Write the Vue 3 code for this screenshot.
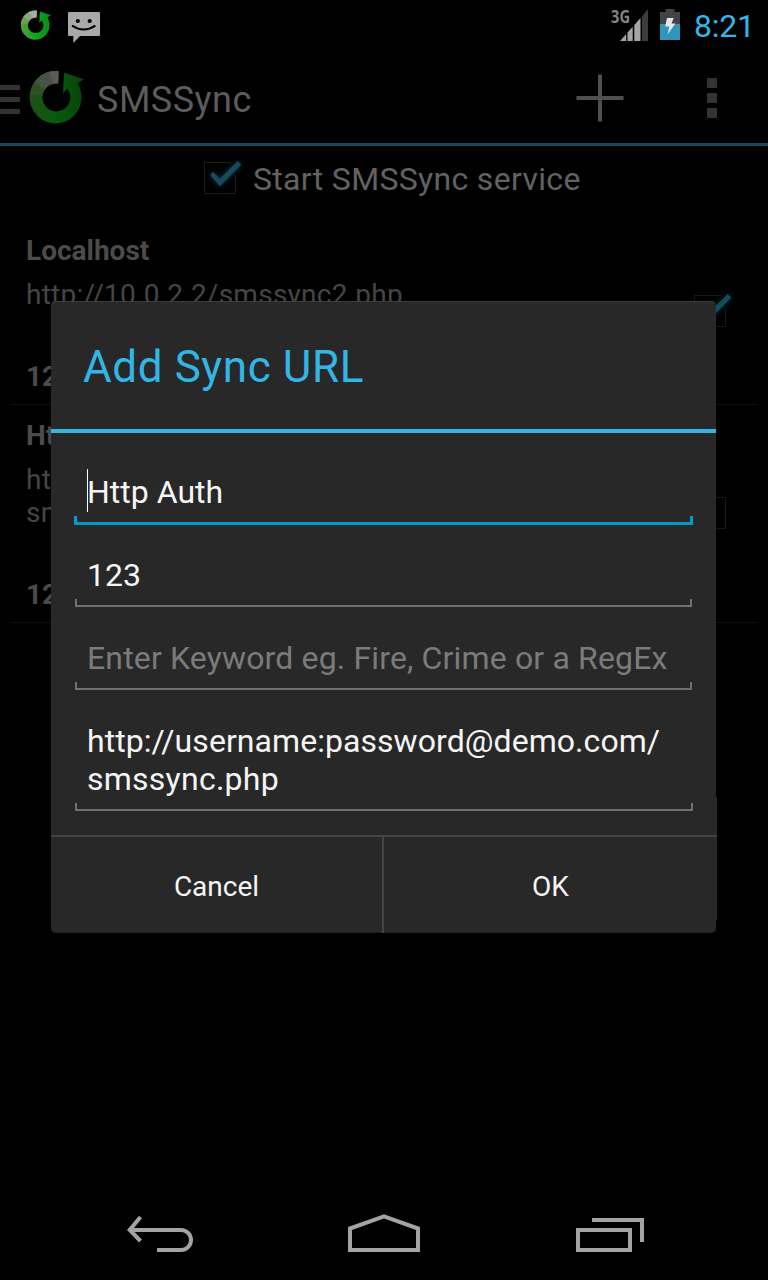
<script setup>
const items = [
  { title: 'Localhost', url: ['http://10.0.2.2/smssync2.php'], secret: '123', checked: true },
  { title: 'Http Auth', url: ['http://username:password@demo.com/', 'smssync.php'], secret: '123', checked: false },
]
const fields = [
  { lines: ['Http Auth'], focused: true },
  { lines: ['123'] },
  { lines: ['Enter Keyword eg. Fire, Crime or a RegEx'], hint: true },
  { lines: ['http://username:password@demo.com/', 'smssync.php'], url: true },
]
const ring = 'M34 2.7 L54 9.3 L47.7 13.3 A26 26.3 0 1 1 28.7 1.1 L28.3 13.6 A14 14 0 1 0 37.3 18.7 L33 23.3Z'
</script>

<template>
  <div class="screen">
    <header class="status">
      <svg class="logo-small" viewBox="0 0 54 54">
        <defs>
          <linearGradient id="ringBright" x1="0" y1="0" x2="1" y2="0">
            <stop offset="0" stop-color="#5a9c3f" /><stop offset=".45" stop-color="#10a51c" /><stop offset="1" stop-color="#078d18" />
          </linearGradient>
          <clipPath id="ringClip"><path :d="ring" /></clipPath>
        </defs>
        <path :d="ring" fill="url(#ringBright)" />
        <g clip-path="url(#ringClip)">
          <path d="M26 27 L-6 24 L-2 6 Z" fill="#6e9c58" />
          <path d="M26 27 L-2 8 L10 -6 Z" fill="#8ba37f" />
          <path d="M26 27 L9 -6 L30 -6 V27Z" fill="#a7aba5" />
        </g>
      </svg>
      <svg class="message" viewBox="0 0 32 31">
        <path d="M1 0H31Q32 0 32 1V23Q32 24 31 24H12L5.3 31V24H1Q0 24 0 23V1Q0 0 1 0Z" fill="#a9a9a9" />
        <circle cx="9.8" cy="9" r="2.1" /><circle cx="21.7" cy="9" r="2.1" />
        <path d="M4 13.7Q15.7 21.5 27.4 13.7" fill="none" stroke="#000" stroke-width="2" />
      </svg>
      <svg class="signal" viewBox="0 0 37 32">
        <path d="M9 32L15.2 25V32ZM16.5 32V23.6L21.7 17.7V32ZM23.3 32V15.9L29.5 9V32Z" fill="#a5a5a5" />
        <path d="M31 32V7.2L37 0V32Z" fill="#3c3c3c" />
        <text x="0" y="14" textLength="19" lengthAdjust="spacingAndGlyphs">3G</text>
      </svg>
      <svg class="battery" viewBox="0 0 20 31">
        <path d="M5.5 0H14.5V3H20V15H0V3H5.5Z" fill="#434343" />
        <path d="M0 15H20V31H0Z" fill="#3094bb" />
        <path d="M7 9H13.7L11.5 14.5H15.5L7.5 25.5L9.3 17.5H5.2Z" fill="#e3e7e8" />
      </svg>
      <span class="clock">8:21</span>
    </header>

    <div class="actionbar">
      <div class="drawer"><i /><i /><i /></div>
      <svg class="logo" viewBox="0 0 54 54">
        <defs>
          <linearGradient id="ringDim" x1="0" y1="0" x2="1" y2="0">
            <stop offset="0" stop-color="#244f18" /><stop offset=".45" stop-color="#075c0c" /><stop offset="1" stop-color="#064409" />
          </linearGradient>
        </defs>
        <path :d="ring" fill="url(#ringDim)" />
        <g clip-path="url(#ringClip)">
          <path d="M26 27 L-6 24 L-2 6 Z" fill="#304f28" />
          <path d="M26 27 L-2 8 L10 -6 Z" fill="#465344" />
          <path d="M26 27 L9 -6 L19 -6Z" fill="#4c504b" />
          <path d="M26 27 L18 -6 L30 -6 V27Z" fill="#5a5b59" />
        </g>
      </svg>
      <span class="app-name">SMSSync</span>
      <svg class="plus" viewBox="0 0 48 48"><path d="M.5 24H47.5M24 .5V47.5" stroke="#4d504c" stroke-width="4" /></svg>
      <div class="overflow"><i /><i /><i /></div>
    </div>

    <div class="service">
      <svg class="check" viewBox="0 0 32 32">
        <path d="M27 .5H.5V31.5H31.5V13" fill="none" stroke="#1c1c1c" />
        <path class="tick" d="M6 13L9.3 9.7L15.7 16.7L33.7 -1L37.3 2.7L16 24.3Z" />
      </svg>
      <span>Start SMSSync service</span>
    </div>

    <ul class="list">
      <li v-for="item in items" :key="item.title" class="item">
        <div>
          <div class="item-title">{{ item.title }}</div>
          <div class="item-url"><div v-for="l in item.url" :key="l">{{ l }}</div></div>
          <div class="item-secret">{{ item.secret }}</div>
        </div>
        <svg class="check" viewBox="0 0 32 32">
          <path :d="item.checked ? 'M27 .5H.5V31.5H31.5V13' : 'M.5 .5H31.5V31.5H.5Z'" fill="none" stroke="#131a13" />
          <path v-if="item.checked" class="tick" d="M6 13L9.3 9.7L15.7 16.7L33.7 -1L37.3 2.7L16 24.3Z" />
        </svg>
      </li>
    </ul>

    <nav class="nav">
      <svg class="back" viewBox="0 0 66 36"><path d="M4 14H54A10 10 0 0 1 54 34H30M13.5 1L2.7 14L13.5 25" /></svg>
      <svg class="home" viewBox="0 0 72 38"><path d="M2 36V14.5L36 2.3L70 14.5V36Z" /></svg>
      <svg class="recent" viewBox="0 0 68 34"><path d="M2 12H54V32H2ZM16 2H66V24" /></svg>
    </nav>

    <section class="dialog">
      <h1>Add Sync URL</h1>
      <div class="form">
        <div v-for="(f, i) in fields" :key="i" class="field" :class="{ focused: f.focused, hint: f.hint, url: f.url }">
          <div v-for="l in f.lines" :key="l" class="line">{{ l }}</div>
          <div class="bracket" />
        </div>
      </div>
      <footer>
        <div class="btn">Cancel</div>
        <div class="btn ok">OK</div>
      </footer>
    </section>
  </div>
</template>

<style>
html, body { background: #000; }
</style>

<style scoped>
.screen { position: relative; width: 768px; height: 1280px; background: #000; overflow: hidden; display: flex; flex-direction: column; font-family: Roboto, sans-serif; }
svg { display: block; flex: none; overflow: visible; }
.status { height: 50px; display: flex; align-items: flex-start; flex: none; }
.logo-small { width: 30px; height: 30px; margin: 10px 0 0 21px; }
.message { width: 32px; height: 31px; margin: 12px 0 0 17px; }
.signal { width: 37px; height: 32px; margin: 9px 0 0 511px; }
.signal text { font: bold 17px "Open Sans", sans-serif; fill: #858585; }
.battery { width: 20px; height: 31px; margin: 9px 0 0 12px; }
.clock { color: #33b5e5; font-size: 32px; line-height: 38px; margin: 7px 0 0 14px; letter-spacing: -0.2px; white-space: nowrap; }
.actionbar { height: 93px; flex: none; display: flex; align-items: flex-start; border-bottom: 3px solid #164b5f; }
.drawer { width: 20px; display: grid; gap: 7px; margin-top: 35px; }
.drawer i { height: 5px; background: #333; }
.logo { width: 54px; height: 54px; margin: 20px 0 0 10px; }
.app-name { width: 160px; color: #5c5c5c; font-size: 36px; line-height: 42px; letter-spacing: 0.5px; margin: 29px 0 0 13px; white-space: nowrap; }
.plus { width: 48px; height: 48px; margin: 24px 0 0 319px; }
.overflow { width: 10px; display: grid; gap: 5px; margin: 28px 0 0 83px; }
.overflow i { height: 10px; background: #333; }
.service { height: 60px; flex: none; padding: 14px 0 0 204px; display: flex; color: #626262; font-size: 32px; line-height: 38px; letter-spacing: 0.32px; white-space: nowrap; }
.service .check { margin: 2px 17px 0 0; }
.check { width: 32px; height: 32px; }
.tick { fill: #164b5f; filter: drop-shadow(0 0 3px #083240); }
.list { list-style: none; margin: 0 10px; padding: 0; flex: 1; }
.item { display: flex; justify-content: space-between; align-items: center; padding: 14px 32px 11px 16px; border-bottom: 1px solid #0e0e0e; font-size: 28px; line-height: 33px; white-space: nowrap; }
.item .check { margin-bottom: 5px; }
.item-title, .item-secret { font-weight: bold; color: #4b4b4b; }
.item-url { color: #454545; margin: 11px 0 49px; letter-spacing: 0.25px; }
.nav { height: 96px; flex: none; display: flex; align-items: flex-start; }
.nav path { fill: none; stroke: #a3a3a3; stroke-width: 4; }
.back { width: 66px; height: 36px; margin: 32px 0 0 127px; }
.home { width: 72px; height: 38px; margin: 30px 0 0 155px; }
.recent { width: 68px; height: 34px; margin: 34px 0 0 156px; }
.dialog { position: absolute; left: 51px; top: 301px; width: 665px; height: 632px; box-sizing: border-box; background: #282828; border-radius: 5px; box-shadow: inset 0 1px #3d3d3d, inset 0 -1px #202020; }
.dialog::after { content: ""; position: absolute; left: 665px; top: 496px; width: 1px; height: 123px; background: #282828; }
h1 { margin: 0; height: 128px; box-sizing: border-box; padding: 40px 0 0 32px; font-size: 44px; line-height: 52px; font-weight: 400; letter-spacing: 0.6px; color: #33b5e5; white-space: nowrap; }
.form { border-top: 4px solid #33b5e5; height: 406px; box-sizing: border-box; padding: 40px 24px 0; }
.field { color: #f5f5f5; font-size: 32px; line-height: 38px; margin-bottom: 32px; white-space: nowrap; }
.line { padding-left: 12px; }
.bracket { height: 8px; box-sizing: border-box; margin-top: 5px; border: 2px solid #707070; border-top: 0; }
.url .bracket { margin-right: -1px; }
.url .line { letter-spacing: 0.06px; }
.url .line:nth-child(2) { letter-spacing: 0.25px; }
.focused { margin-bottom: 31px; }
.focused .bracket { height: 9px; border-width: 0 3px 3px; border-color: #0099d2; margin-left: -1px; margin-right: -1px; }
.focused .line { position: relative; }
.focused .line::before { content: ""; position: absolute; left: 12px; top: -4px; width: 1px; height: 43px; background: #fff; }
.hint { color: #7b7b7b; letter-spacing: 0.15px; }
footer { width: 666px; height: 98px; box-sizing: border-box; display: flex; border-top: 2px solid #444; position: relative; z-index: 1; }
.btn { width: 331px; box-sizing: border-box; text-align: center; color: #f5f5f5; font-size: 28px; line-height: 33px; padding-top: 33px; }
.ok { width: 335px; border-left: 2px solid #444; }
</style>
